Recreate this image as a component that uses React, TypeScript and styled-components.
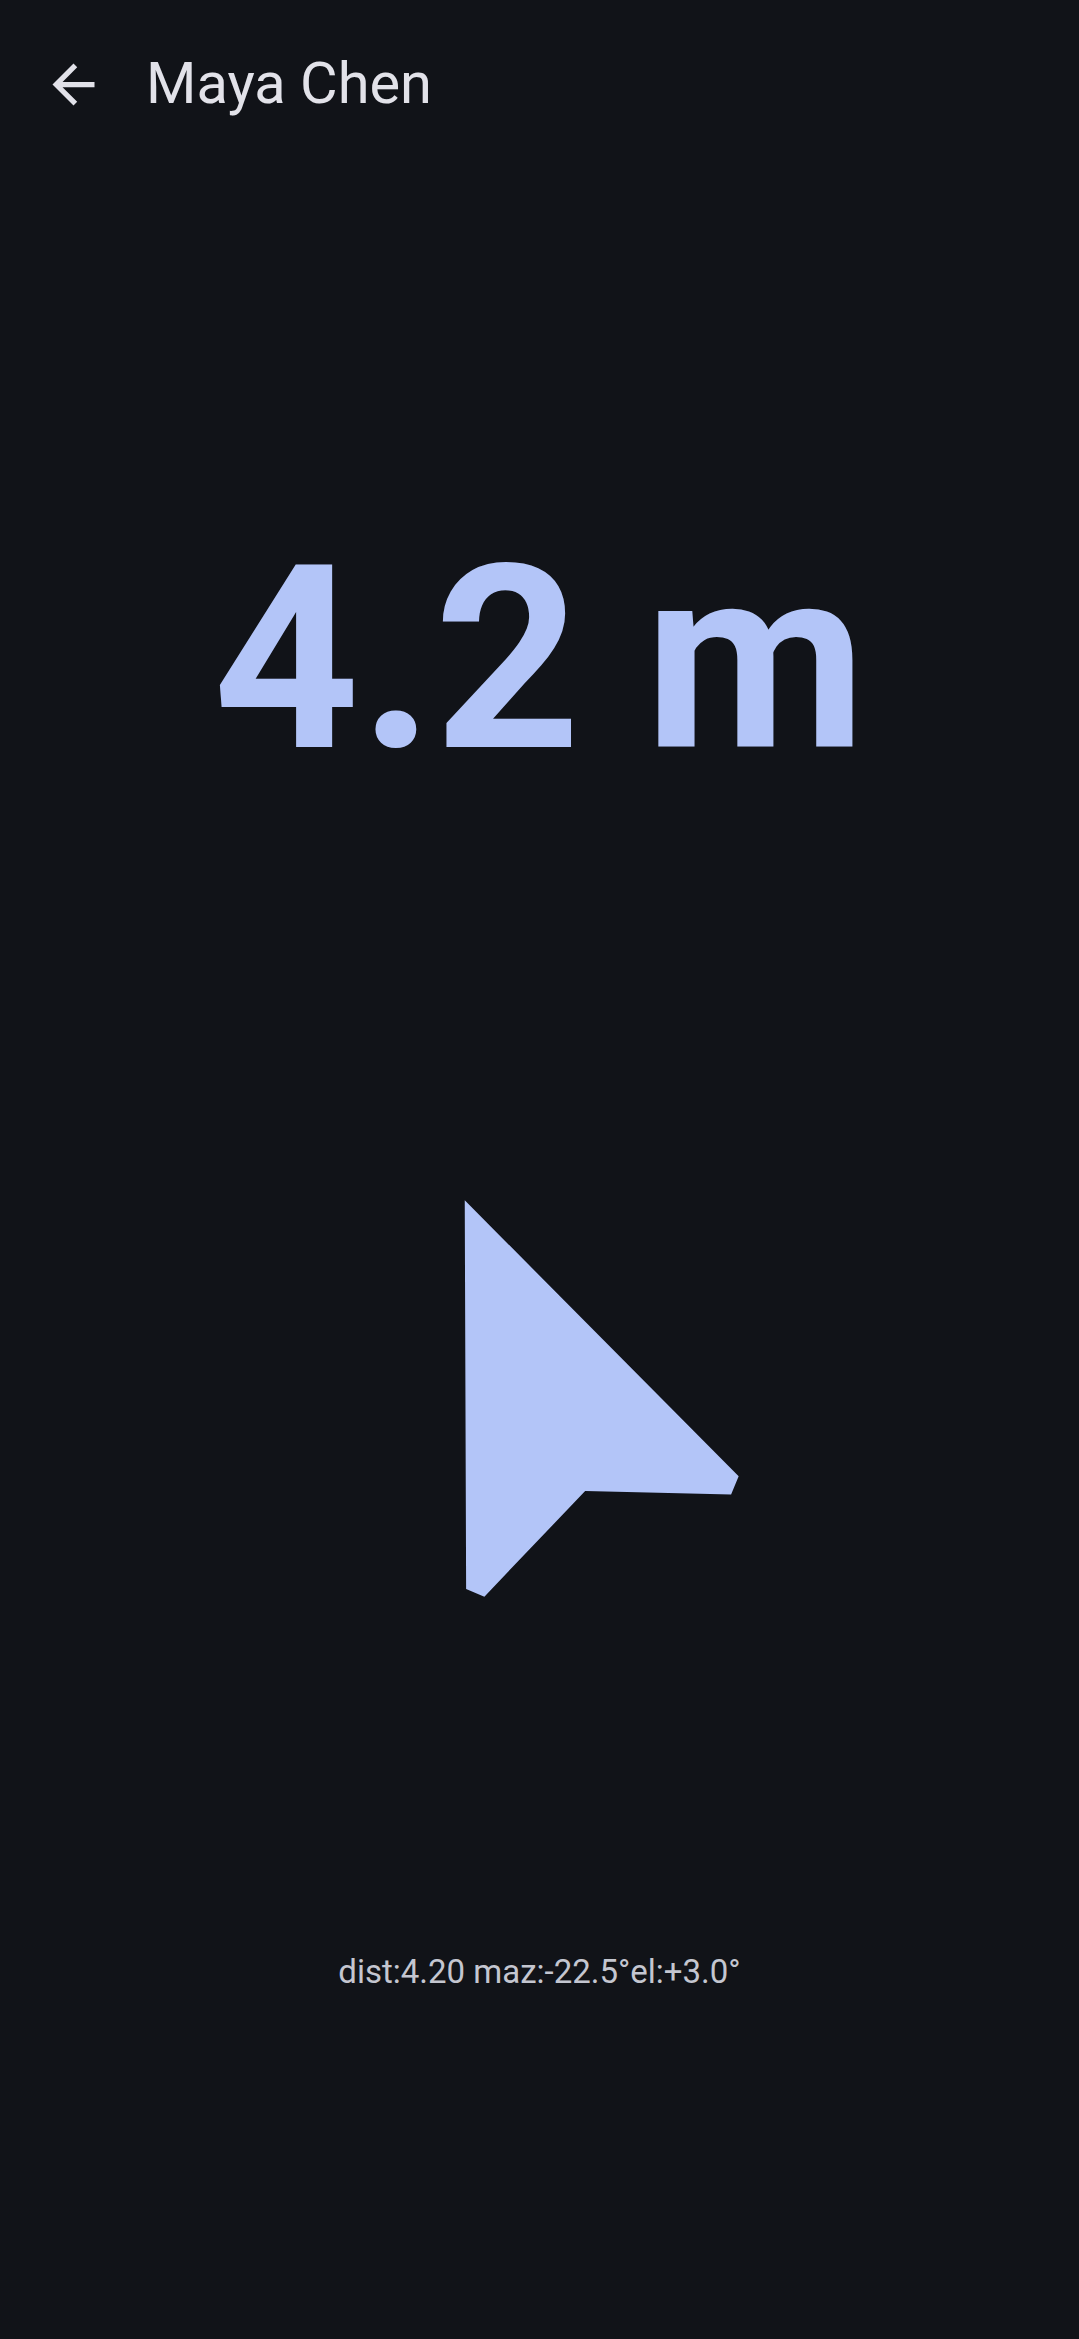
import React from 'react';
import styled, { createGlobalStyle } from 'styled-components';

const COLORS = {
  background: '#111318',
  onSurface: '#e2e2e9',
  onSurfaceVariant: '#c4c6d0',
  primary: '#b3c5f8',
};

const GlobalStyle = createGlobalStyle`
  html, body {
    margin: 0;
    padding: 0;
    background: ${COLORS.background};
  }

  body {
    font-family: Roboto, 'Noto Sans', sans-serif;
  }
`;

const Page = styled.div`
  min-height: 2339px;
  display: flex;
  flex-direction: column;
  background: ${COLORS.background};
  overflow: hidden;
`;

const TopBar = styled.header`
  height: 168px;
  display: flex;
  align-items: center;
  padding-left: 42px;
  gap: 41px;
`;

const BackButton = styled.button`
  appearance: none;
  border: none;
  background: transparent;
  padding: 0;
  width: 63px;
  height: 63px;
  color: ${COLORS.onSurface};
  display: flex;

  svg {
    width: 100%;
    height: 100%;
  }
`;

const Title = styled.h1`
  margin: 0;
  font-size: 57.75px;
  line-height: 1;
  font-weight: 400;
  color: ${COLORS.onSurface};
`;

const Content = styled.main`
  display: flex;
  flex-direction: column;
  align-items: center;
`;

const Distance = styled.div`
  margin-top: 364px;
  height: 256px;
  font-size: 256px;
  line-height: 1;
  font-weight: 700;
  color: ${COLORS.primary};
  white-space: nowrap;
`;

const Pointer = styled.div<{ $angle: number }>`
  margin-top: 358px;
  width: 472px;
  height: 472px;
  color: ${COLORS.primary};
  transform: rotate(${(p) => p.$angle}deg);

  svg {
    width: 100%;
    height: 100%;
    display: block;
  }
`;

const Debug = styled.div`
  margin-top: 337px;
  font-size: 33px;
  line-height: 1;
  color: ${COLORS.onSurfaceVariant};
  white-space: nowrap;
`;

const App: React.FC = () => {
  const azimuth = -22.5;

  return (
    <Page>
      <GlobalStyle />
      <TopBar>
        <BackButton aria-label="Back">
          <svg viewBox="0 0 24 24" fill="currentColor">
            <path d="M20 11H7.83l5.59-5.59L12 4l-8 8 8 8 1.41-1.41L7.83 13H20v-2z" />
          </svg>
        </BackButton>
        <Title>Maya Chen</Title>
      </TopBar>
      <Content>
        <Distance>4.2 m</Distance>
        <Pointer $angle={azimuth}>
          <svg viewBox="0 0 24 24" fill="currentColor">
            <path d="M12 2L4.5 20.29l.71.71L12 18l6.79 3 .71-.71z" />
          </svg>
        </Pointer>
        <Debug>dist:4.20 maz:-22.5°el:+3.0°</Debug>
      </Content>
    </Page>
  );
};

export default App;
